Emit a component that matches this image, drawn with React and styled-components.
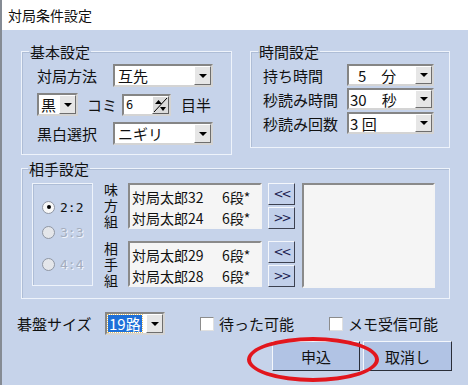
import React from "react";
import styled, { createGlobalStyle } from "styled-components";

const GlobalStyle = createGlobalStyle`
  html, body {
    margin: 0;
    padding: 0;
  }
  body {
    width: 468px;
    height: 385px;
    overflow: hidden;
    font-family: "Noto Sans CJK JP", "Noto Sans", sans-serif;
  }
`;

const Window = styled.div`
  position: relative;
  width: 468px;
  height: 385px;
  display: flex;
  flex-direction: column;
  border-left: 2px solid #858b94;
  box-sizing: border-box;
  color: #111;
  font-size: 15px;
`;

const TitleBar = styled.div`
  height: 30px;
  background: #fff;
  padding-left: 6px;
  font-size: 14px;
  line-height: 30px;
`;

const Body = styled.div`
  flex: 1;
  background: #c6d3ea;
  padding: 14px 16px 0 15px;
`;

const TopRow = styled.div`
  display: flex;
  align-items: flex-start;
  gap: 18px;
  margin-left: 4px;
`;

const Group = styled.fieldset`
  margin: 0;
  width: ${(p) => p.$w}px;
  height: ${(p) => p.$h}px;
  box-sizing: border-box;
  padding: ${(p) => p.$pad};
  border: 1px solid #eef3fb;
  box-shadow: 1px 1px 0 #aebdd6 inset;
  min-inline-size: 0;
`;

const Legend = styled.legend`
  margin-left: ${(p) => p.$ml}px;
  padding: 0 1px;
  font-size: 15px;
  line-height: 15px;
`;

const Rows = styled.div`
  display: flex;
  flex-direction: column;
  gap: ${(p) => p.$gap}px;
`;

const Row = styled.div`
  display: flex;
  align-items: center;
  height: ${(p) => p.$h || 23}px;
`;

const Label = styled.span`
  width: ${(p) => (p.$w ? `${p.$w}px` : "auto")};
  margin-left: ${(p) => p.$ml || 0}px;
  margin-right: ${(p) => p.$mr || 0}px;
  white-space: nowrap;
  flex: none;
`;

const ComboBox = styled.div`
  display: flex;
  width: ${(p) => p.$w}px;
  height: ${(p) => p.$h}px;
  box-sizing: border-box;
  border: 2px solid;
  border-color: #858585 #d4d4d4 #d4d4d4 #858585;
  background: #fff;
  flex: none;
`;

const ComboText = styled.div`
  flex: 1;
  display: flex;
  align-items: center;
  padding-left: ${(p) => p.$pl ?? 3}px;
  font-size: 15px;
  white-space: pre;
  overflow: hidden;
`;

const Selected = styled.span`
  background: #1d6fd8;
  color: #fff;
  outline: 1px dotted #e8c36a;
  padding: 0 1px;
  line-height: 17px;
`;

const DropButton = styled.div`
  width: 17px;
  flex: none;
  display: flex;
  align-items: center;
  justify-content: center;
  background: #e6e6e6;
  border-left: 1px solid #fff;
  border-top: 1px solid #fff;
  border-right: 1px solid #6e6e6e;
  border-bottom: 1px solid #6e6e6e;
  box-sizing: border-box;
`;

const Caret = styled.span`
  width: 0;
  height: 0;
  border-left: 4px solid transparent;
  border-right: 4px solid transparent;
  border-top: 4px solid #000;
`;

const Combo = ({ w, h = 23, pl, children }) => (
  <ComboBox $w={w} $h={h}>
    <ComboText $pl={pl}>{children}</ComboText>
    <DropButton>
      <Caret />
    </DropButton>
  </ComboBox>
);

const SpinBox = styled.div`
  display: flex;
  width: 49px;
  height: 22px;
  box-sizing: border-box;
  border: 2px solid;
  border-color: #858585 #d4d4d4 #d4d4d4 #858585;
  background: #fff;
  flex: none;
`;

const SpinField = styled.div`
  flex: 1;
  padding-left: 2px;
  font-family: "DejaVu Sans Mono", monospace;
  font-size: 12px;
  line-height: 18px;
`;

const SpinButton = styled.div`
  width: 17px;
  background: #dcdcdc;
  border: 1px solid;
  border-color: #fff #5e5e5e #5e5e5e #fff;
  box-sizing: border-box;
  flex: none;
  display: flex;
`;

const Partner = styled.div`
  display: flex;
  align-items: flex-start;
  gap: 10px;
`;

const RadioPanel = styled.div`
  width: 61px;
  height: 103px;
  box-sizing: border-box;
  border: 1px solid #eef3fb;
  box-shadow: 1px 1px 0 #aebdd6 inset;
  display: flex;
  flex-direction: column;
  padding: 12px 0 0 9px;
`;

const RadioRow = styled.div`
  display: flex;
  align-items: center;
  gap: 5px;
  height: 22px;
  margin-top: ${(p) => p.$mt || 0}px;
  font-family: "DejaVu Sans Mono", monospace;
  font-size: 13px;
  color: ${(p) => (p.$disabled ? "#a5aebf" : "#111")};
  text-shadow: ${(p) => (p.$disabled ? "1px 1px 0 #f1f4fa" : "none")};
`;

const RadioDot = styled.span`
  width: 13px;
  height: 13px;
  border-radius: 50%;
  box-sizing: border-box;
  border: 1px solid #8f96a3;
  background: ${(p) => (p.$disabled ? "#e4e6ea" : "#f8f8f8")};
  display: flex;
  align-items: center;
  justify-content: center;
  &::after {
    content: "";
    width: 4px;
    height: 4px;
    border-radius: 50%;
    background: ${(p) => (p.$checked ? "#000" : "transparent")};
  }
`;

const Teams = styled.div`
  display: flex;
  flex-direction: column;
  gap: 12px;
`;

const TeamRow = styled.div`
  display: flex;
  align-items: flex-start;
  height: 46px;
`;

const VLabel = styled.div`
  width: 15px;
  height: 50px;
  flex: none;
  margin-right: 10px;
  margin-top: ${(p) => p.$mt || 0}px;
  font-size: 14px;
  line-height: 15px;
  writing-mode: vertical-rl;
  text-orientation: upright;
  letter-spacing: 2px;
  white-space: nowrap;
`;

const ListBox = styled.div`
  width: ${(p) => p.$w}px;
  height: ${(p) => p.$h}px;
  box-sizing: border-box;
  background: #f5f5f5;
  border: 2px solid;
  border-color: #8a8a8a #f4f4f4 #f4f4f4 #8a8a8a;
  padding: 2px 0 0 2px;
  margin-left: ${(p) => p.$ml || 0}px;
  flex: none;
`;

const Entry = styled.div`
  display: flex;
  font-size: 14px;
  line-height: 21px;
  white-space: nowrap;
`;

const EntryName = styled.span`
  width: 90px;
`;

const ArrowStack = styled.div`
  display: flex;
  flex-direction: column;
  gap: 2px;
  margin-left: 6px;
`;

const ArrowButton = styled.div`
  width: 27px;
  height: 22px;
  box-sizing: border-box;
  background: #c2d0ea;
  border: 1px solid;
  border-color: #f4f7fc #3c4150 #3c4150 #f4f7fc;
  display: flex;
  align-items: center;
  justify-content: center;
  color: #1c2250;
  font-family: "DejaVu Sans", sans-serif;
  font-size: 12px;
  letter-spacing: -2px;
`;

const BottomRow = styled.div`
  display: flex;
  align-items: center;
  height: 23px;
  margin-top: 13px;
`;

const CheckItem = styled.label`
  display: flex;
  align-items: center;
  gap: 5px;
  margin-left: ${(p) => p.$ml}px;
`;

const CheckBox = styled.span`
  width: 14px;
  height: 14px;
  box-sizing: border-box;
  background: #fff;
  border: 1px solid;
  border-color: #8c8c8c #e0e0e0 #e0e0e0 #8c8c8c;
`;

const ButtonRow = styled.div`
  display: flex;
  justify-content: flex-end;
  gap: 3px;
  margin-top: 6px;
`;

const DialogButton = styled.div`
  width: ${(p) => p.$w}px;
  height: 30px;
  box-sizing: border-box;
  background: #b1c3e4;
  border: 1px solid;
  border-color: #f4f7fc #2a2e38 #2a2e38 #f4f7fc;
  display: flex;
  align-items: center;
  justify-content: center;
  font-size: 15px;
`;

const Mark = styled.div`
  position: absolute;
  left: 245px;
  top: 337px;
  width: 132px;
  height: 45px;
  box-sizing: border-box;
  border: 4px solid #e2161d;
  border-radius: 50%;
  pointer-events: none;
`;

const SpinArrows = () => (
  <svg width="15" height="16" viewBox="0 0 15 16">
    <line x1="1" y1="15" x2="14" y2="1" stroke="#000" strokeWidth="1" />
    <polygon points="2,7 5.5,3 9,7" fill="#000" />
    <polygon points="7,10 13,10 10,14" fill="#000" />
  </svg>
);

const team1 = ["対局太郎32", "対局太郎24"];
const team2 = ["対局太郎29", "対局太郎28"];

const Team = ({ label, names, mt }) => (
  <TeamRow>
    <VLabel $mt={mt}>{label}</VLabel>
    <ListBox $w={134} $h={46}>
      {names.map((n) => (
        <Entry key={n}>
          <EntryName>{n}</EntryName>
          <span>6段*</span>
        </Entry>
      ))}
    </ListBox>
    <ArrowStack>
      <ArrowButton>&lt;&lt;</ArrowButton>
      <ArrowButton>&gt;&gt;</ArrowButton>
    </ArrowStack>
  </TeamRow>
);

export default function App() {
  return (
    <>
      <GlobalStyle />
      <Window>
        <TitleBar>対局条件設定</TitleBar>
        <Body>
          <TopRow>
            <Group $w={211} $h={111} $pad="5px 0 0 15px">
              <Legend $ml={-8}>基本設定</Legend>
              <Rows $gap={6}>
                <Row>
                  <Label $w={76}>対局方法</Label>
                  <Combo w={100}>互先</Combo>
                </Row>
                <Row>
                  <Combo w={41} pl={2}>
                    黒
                  </Combo>
                  <Label $ml={9} $mr={5}>
                    コミ
                  </Label>
                  <SpinBox>
                    <SpinField>6</SpinField>
                    <SpinButton>
                      <SpinArrows />
                    </SpinButton>
                  </SpinBox>
                  <Label $ml={10}>目半</Label>
                </Row>
                <Row>
                  <Label $w={76}>黒白選択</Label>
                  <Combo w={100}>ニギリ</Combo>
                </Row>
              </Rows>
            </Group>
            <Group $w={200} $h={104} $pad="5px 0 0 12px">
              <Legend $ml={-5}>時間設定</Legend>
              <Rows $gap={2}>
                <Row $h={22}>
                  <Label $w={84}>持ち時間</Label>
                  <Combo w={87} h={22} pl={9}>
                    5　分
                  </Combo>
                </Row>
                <Row $h={22}>
                  <Label $w={84}>秒読み時間</Label>
                  <Combo w={87} h={22} pl={1}>
                    30　秒
                  </Combo>
                </Row>
                <Row $h={22}>
                  <Label $w={84}>秒読み回数</Label>
                  <Combo w={87} h={22} pl={1}>
                    3 回
                  </Combo>
                </Row>
              </Rows>
            </Group>
          </TopRow>
          <Group
            $w={429}
            $h={138}
            $pad="7px 0 0 10px"
            style={{ marginTop: 6, marginLeft: 4 }}
          >
            <Legend $ml={-4}>相手設定</Legend>
            <Partner>
              <RadioPanel>
                <RadioRow>
                  <RadioDot $checked />
                  2:2
                </RadioRow>
                <RadioRow $disabled $mt={3}>
                  <RadioDot $disabled />
                  3:3
                </RadioRow>
                <RadioRow $disabled $mt={10}>
                  <RadioDot $disabled />
                  4:4
                </RadioRow>
              </RadioPanel>
              <Teams>
                <Team label="味方組" names={team1} mt={0} />
                <Team label="相手組" names={team2} mt={1} />
              </Teams>
              <ListBox $w={133} $h={105} $ml={-3} />
            </Partner>
          </Group>
          <BottomRow>
            <Label $w={88}>碁盤サイズ</Label>
            <Combo w={60} pl={1}>
              <Selected>19路</Selected>
            </Combo>
            <CheckItem $ml={35}>
              <CheckBox />
              待った可能
            </CheckItem>
            <CheckItem $ml={35}>
              <CheckBox />
              メモ受信可能
            </CheckItem>
          </BottomRow>
          <ButtonRow>
            <DialogButton $w={88}>申込</DialogButton>
            <DialogButton $w={89}>取消し</DialogButton>
          </ButtonRow>
        </Body>
        <Mark />
      </Window>
    </>
  );
}
